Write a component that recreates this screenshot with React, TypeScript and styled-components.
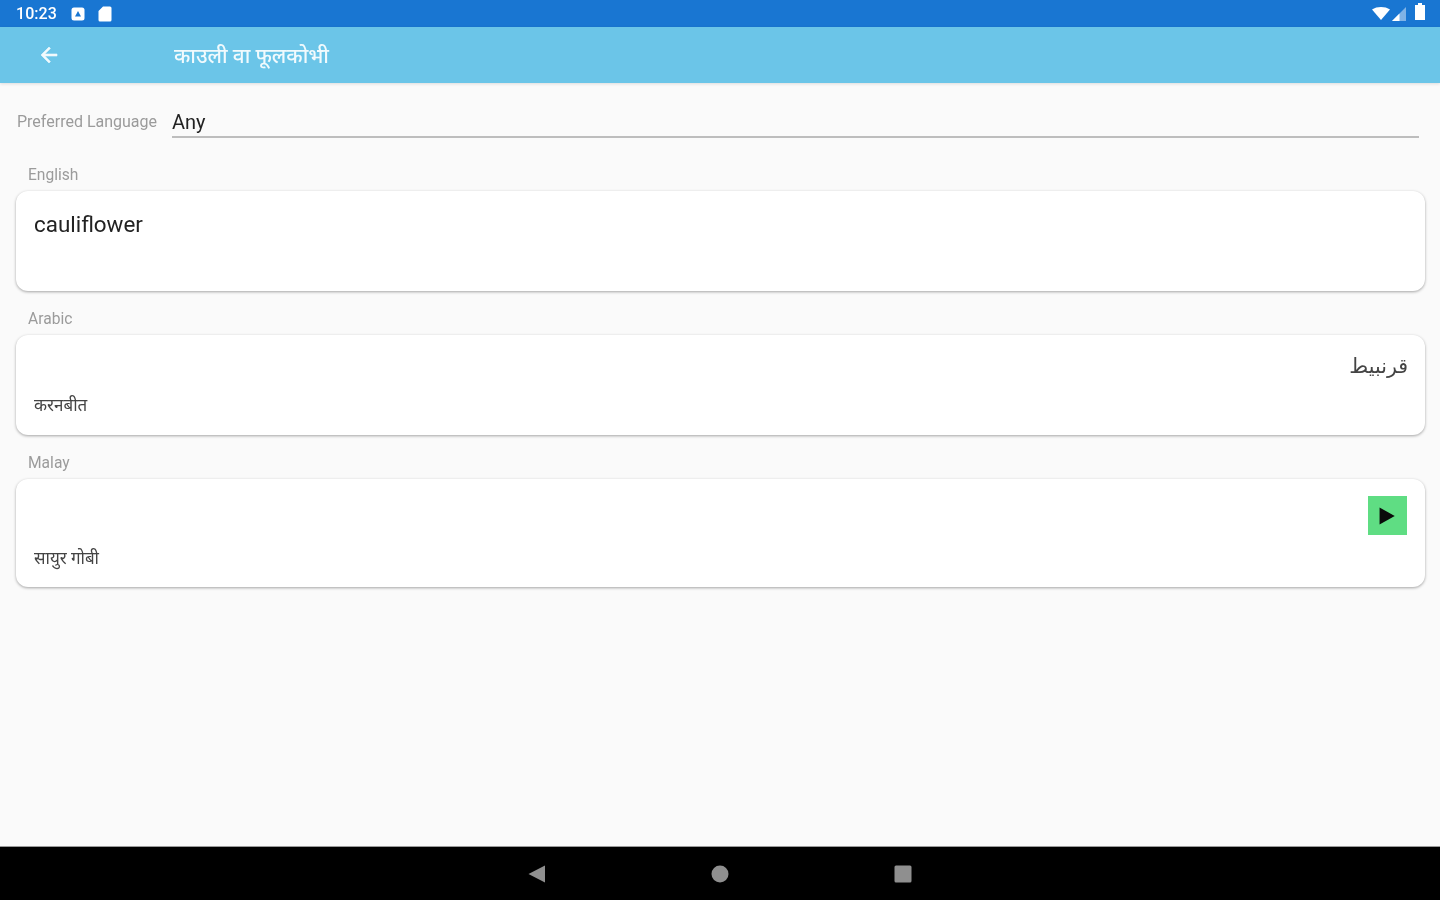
import React from "react";
import styled, { createGlobalStyle } from "styled-components";

const GlobalStyle = createGlobalStyle`
  html, body {
    margin: 0;
    padding: 0;
    background: #fafafa;
  }
  body {
    font-family: "Roboto", "Noto Sans", "Noto Sans Devanagari", "DejaVu Sans", sans-serif;
  }
`;

// the reference is an upscaled low-res capture, so everything is a little soft
const Screen = styled.div`
  width: 1440px;
  height: 900px;
  display: flex;
  flex-direction: column;
  overflow: hidden;
  background: #fafafa;
  filter: blur(0.6px);
`;

const StatusBar = styled.div`
  height: 27px;
  flex: none;
  background: #1976d2;
  display: flex;
  align-items: center;
  padding: 0 15px 0 16px;
  color: #fff;
  box-sizing: border-box;
`;

const Clock = styled.span`
  font-size: 16px;
  font-weight: 500;
  letter-spacing: 0.05px;
  margin-right: 14px;
`;

const StatusLeft = styled.div`
  display: flex;
  align-items: center;
  gap: 13px;
`;

const StatusRight = styled.div`
  margin-left: auto;
  display: flex;
  align-items: center;
  gap: 2px;
`;

const AppBar = styled.header`
  height: 56px;
  flex: none;
  background: #6bc5e8;
  display: flex;
  align-items: center;
  padding-left: 37px;
  box-shadow: 0 1px 3px rgba(0, 0, 0, 0.12);
  position: relative;
`;

const Title = styled.h1`
  margin: 0 0 0 113px;
  font-size: 20.8px;
  font-weight: 500;
  color: #f1fafd;
`;

const Content = styled.main`
  flex: 1;
  padding: 0 15px 0 16px;
  display: flex;
  flex-direction: column;
`;

const LanguageRow = styled.div`
  display: flex;
  align-items: flex-end;
  height: 55px;
  margin-right: 6px;
`;

const LanguageLabel = styled.span`
  width: 155px;
  padding-left: 1px;
  flex: none;
  font-size: 16px;
  color: #9b9b9b;
  padding-bottom: 7px;
`;

const LanguageSelect = styled.div`
  flex: 1;
  font-size: 20px;
  color: #222;
  height: 27px;
  line-height: 26px;
  border-bottom: 2px solid #bdbdbd;
`;

const SectionLabel = styled.div<{ $first?: boolean }>`
  font-size: 15.6px;
  color: #9b9b9b;
  height: 17px;
  line-height: 17px;
  padding-left: 12px;
  margin-bottom: 7px;
  margin-top: ${(p) => (p.$first ? "29px" : "20px")};
`;

const Card = styled.section<{ $height: number }>`
  height: ${(p) => p.$height}px;
  box-sizing: border-box;
  background: #fff;
  border-radius: 12px;
  box-shadow: 0 1px 3px rgba(0, 0, 0, 0.35);
  padding: 16px 18px 18px;
  display: flex;
  flex-direction: column;
`;

const Word = styled.div`
  font-size: 22.4px;
  color: #222;
  line-height: 36px;
  margin-top: -1px;
`;

const Translated = styled.div`
  margin-top: auto;
  font-size: 17px;
  line-height: 24px;
  color: #444;
`;

const MalayTranslated = styled(Translated)`
  margin-bottom: -1px;
`;

const ArabicWord = styled.div`
  direction: rtl;
  font-family: "DejaVu Sans", sans-serif;
  font-size: 20.5px;
  line-height: 28px;
  color: #444;
  margin: 1px -1px 0 0;
`;

const PlayButton = styled.div`
  width: 39px;
  height: 39px;
  margin-top: 1px;
  align-self: flex-end;
  background: #5fdd83;
  display: flex;
  align-items: center;
  justify-content: center;
`;

const NavBar = styled.nav`
  height: 54px;
  flex: none;
  background: #000;
  border-top: 1px solid #9a9a9a;
  box-sizing: border-box;
  display: flex;
  align-items: center;
  justify-content: center;
  gap: 165px;
`;

const BatteryIcon = styled.svg`
  margin: 0 0 4px 7px;
`;

export default function App() {
  return (
    <Screen>
      <GlobalStyle />
      <StatusBar>
        <Clock>10:23</Clock>
        <StatusLeft>
          <svg width="14" height="14" viewBox="0 0 14 14">
            <rect x="0.5" y="0.5" width="13" height="13" rx="2.5" fill="#fff" />
            <path d="M7 4 L10 9.5 H4 Z" fill="#1976d2" />
          </svg>
          <svg width="14" height="16" viewBox="0 0 14 16">
            <path d="M5 0.5 H12 A1.5 1.5 0 0 1 13.5 2 V14 A1.5 1.5 0 0 1 12 15.5 H2 A1.5 1.5 0 0 1 0.5 14 V5 Z" fill="#fff" />
          </svg>
        </StatusLeft>
        <StatusRight>
          <svg width="18" height="13" viewBox="0 0 18 13">
            <path d="M0 2.5 C5 -0.8 13 -0.8 18 2.5 L9 13 Z" fill="#fff" />
          </svg>
          <svg width="14" height="14" viewBox="0 0 14 14">
            <path d="M14 0 V14 H0 Z" fill="#fff" opacity="0.45" />
            <path d="M7.5 6.5 V14 H0 Z" fill="#fff" />
          </svg>
          <BatteryIcon width="10" height="17" viewBox="0 0 10 17">
            <path d="M3 0 H7 V2 H10 V17 H0 V2 H3 Z" fill="#fff" />
          </BatteryIcon>
        </StatusRight>
      </StatusBar>
      <AppBar>
        <svg width="24" height="24" viewBox="0 0 24 24">
          <path d="M20 11H7.83l5.59-5.59L12 4l-8 8 8 8 1.41-1.41L7.83 13H20v-2z" fill="#f1fafd" stroke="#f1fafd" strokeWidth="0.6" />
        </svg>
        <Title>काउली वा फूलकोभी</Title>
      </AppBar>
      <Content>
        <LanguageRow>
          <LanguageLabel>Preferred Language</LanguageLabel>
          <LanguageSelect>Any</LanguageSelect>
        </LanguageRow>
        <SectionLabel $first>English</SectionLabel>
        <Card $height={100}>
          <Word>cauliflower</Word>
        </Card>
        <SectionLabel>Arabic</SectionLabel>
        <Card $height={100}>
          <ArabicWord>قرنبيط</ArabicWord>
          <Translated>करनबीत</Translated>
        </Card>
        <SectionLabel>Malay</SectionLabel>
        <Card $height={108}>
          <PlayButton>
            <svg width="18" height="18" viewBox="0 0 16 16">
              <path d="M0.5 0.5 L14 8 L0.5 15.5 Z" fill="#0a0a0a" />
            </svg>
          </PlayButton>
          <MalayTranslated>सायुर गोबी</MalayTranslated>
        </Card>
      </Content>
      <NavBar>
        <svg width="18" height="18" viewBox="0 0 18 18">
          <path d="M17 0.5 V17.5 L0.5 9 Z" fill="#8f8f8f" />
        </svg>
        <svg width="18" height="18" viewBox="0 0 18 18">
          <circle cx="9" cy="9" r="8.5" fill="#8f8f8f" />
        </svg>
        <svg width="18" height="18" viewBox="0 0 18 18">
          <rect x="0.5" y="0.5" width="17" height="17" rx="1.5" fill="#8f8f8f" />
        </svg>
      </NavBar>
    </Screen>
  );
}
